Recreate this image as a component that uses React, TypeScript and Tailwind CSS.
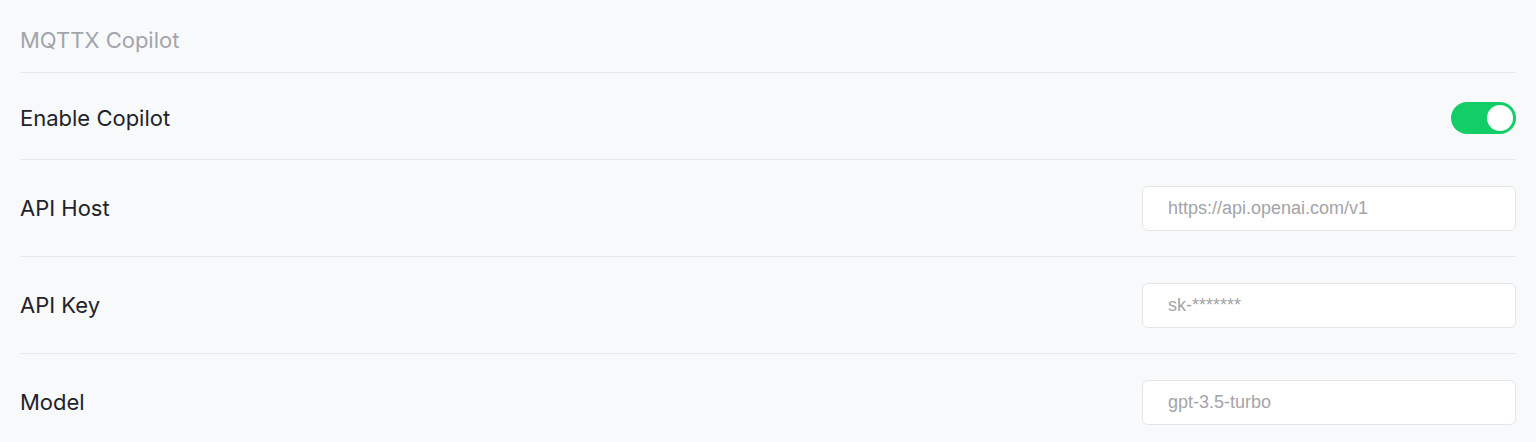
import React, { useState } from "react";

function Row({
  label,
  children,
  className,
}: {
  label: string;
  children: React.ReactNode;
  className: string;
}) {
  return (
    <div className={`flex items-center justify-between ${className}`}>
      <span className="text-[22px] leading-[30px] text-[#1f2329]">{label}</span>
      {children}
    </div>
  );
}

function Field({ placeholder }: { placeholder: string }) {
  return (
    <input
      placeholder={placeholder}
      className="h-[45px] w-[374px] rounded-[6px] border border-[#e3e5e8] bg-white pl-[25px] pr-3 text-[18px] text-[#333] outline-none placeholder:text-[#a3a4a7]"
      style={{ fontFamily: '"Liberation Sans", Arial, sans-serif' }}
    />
  );
}

export default function App() {
  const [on, setOn] = useState(true);
  return (
    <div
      className="min-h-[442px] w-full bg-[#f8f9fb] px-5"
      style={{ fontFamily: 'Inter, "Noto Sans", sans-serif' }}
    >
      <div className="h-[73px] border-b border-[#e5e7eb] pt-[25px]">
        <span className="text-[22px] leading-[30px] text-[#a2a5ab]">MQTTX Copilot</span>
      </div>
      <Row label="Enable Copilot" className="h-[87px] border-b border-[#e5e7eb] pt-[3px]">
        <button
          onClick={() => setOn(!on)}
          className={`flex h-[32px] w-[65px] items-center rounded-full p-[3px] ${
            on ? "justify-end bg-[#13ce66]" : "justify-start bg-[#dcdfe6]"
          }`}
        >
          <span className="block h-[26px] w-[26px] rounded-full bg-white" />
        </button>
      </Row>
      <Row label="API Host" className="h-[97px] border-b border-[#e5e7eb]">
        <Field placeholder="https://api.openai.com/v1" />
      </Row>
      <Row label="API Key" className="h-[97px] border-b border-[#e5e7eb]">
        <Field placeholder="sk-*******" />
      </Row>
      <Row label="Model" className="h-[96px]">
        <Field placeholder="gpt-3.5-turbo" />
      </Row>
    </div>
  );
}
